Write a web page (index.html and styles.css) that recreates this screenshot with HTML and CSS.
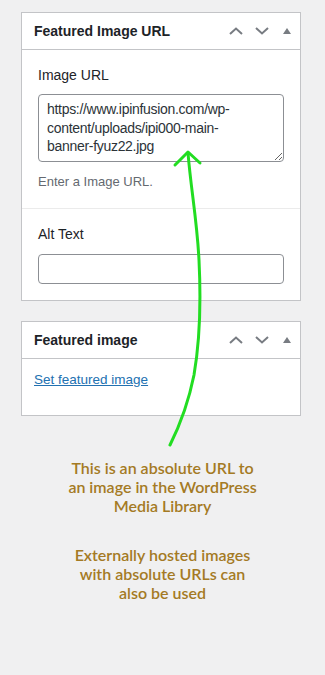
FILE: index.html
```html
<!DOCTYPE html>
<html lang="en">
<head>
    <meta charset="UTF-8">
    <meta name="viewport" content="width=device-width, initial-scale=1.0">
    <title>Featured Image URL</title>
    <link rel="stylesheet" href="styles.css">
</head>
<body>
    <div class="sidebar">
        <section class="postbox">
            <header class="postbox-header">
                <h2 class="postbox-title">Featured Image URL</h2>
                <div class="handle-actions">
                    <svg class="handle" viewBox="0 0 14 8" width="14" height="8"><path d="M1 7 L7 1.5 L13 7" fill="none" stroke="#787c82" stroke-width="2"/></svg>
                    <svg class="handle" viewBox="0 0 14 8" width="14" height="8"><path d="M1 1 L7 6.5 L13 1" fill="none" stroke="#787c82" stroke-width="2"/></svg>
                    <svg class="handle toggle" viewBox="0 0 8 6" width="8" height="6"><path d="M4 0 L8 6 L0 6 Z" fill="#787c82"/></svg>
                </div>
            </header>
            <div class="field">
                <label class="field-label" for="image-url">Image URL</label>
                <textarea id="image-url" class="field-textarea" rows="3">https://www.ipinfusion.com/wp-content/uploads/ipi000-main-banner-fyuz22.jpg</textarea>
                <p class="field-help">Enter a Image URL.</p>
            </div>
            <div class="field field-last">
                <label class="field-label" for="alt-text">Alt Text</label>
                <input id="alt-text" class="field-input" type="text">
            </div>
        </section>

        <section class="postbox">
            <header class="postbox-header">
                <h2 class="postbox-title">Featured image</h2>
                <div class="handle-actions">
                    <svg class="handle" viewBox="0 0 14 8" width="14" height="8"><path d="M1 7 L7 1.5 L13 7" fill="none" stroke="#787c82" stroke-width="2"/></svg>
                    <svg class="handle" viewBox="0 0 14 8" width="14" height="8"><path d="M1 1 L7 6.5 L13 1" fill="none" stroke="#787c82" stroke-width="2"/></svg>
                    <svg class="handle toggle" viewBox="0 0 8 6" width="8" height="6"><path d="M4 0 L8 6 L0 6 Z" fill="#787c82"/></svg>
                </div>
            </header>
            <div class="postbox-inside">
                <a href="#" class="set-image">Set featured image</a>
            </div>
        </section>
    </div>

    <div class="notes">
        <p>This is an absolute URL to<br>an image in the WordPress<br>Media Library</p>
        <p>Externally hosted images<br>with absolute URLs can<br>also be used</p>
    </div>

    <!-- hand-drawn arrow over the panels -->
    <svg class="arrow" width="325" height="675" viewBox="0 0 325 675">
        <path d="M170 445 C180 425 188 405 194 375 C200 340 201 300 199 260 C197 220 191 190 188 153" fill="none" stroke="#22dd22" stroke-width="3" stroke-linecap="round"/>
        <path d="M175 165 L188 152 L200 163" fill="none" stroke="#22dd22" stroke-width="3" stroke-linecap="round" stroke-linejoin="round"/>
    </svg>
</body>
</html>
```

FILE: styles.css
```css
body {
    margin: 0;
    background-color: #f0f0f1;
    font-family: "Liberation Sans", Arial, sans-serif;
    color: #1d2327;
    position: relative;
    min-height: 675px;
}

.sidebar {
    width: 280px;
    padding: 12px 0 0 21px;
    display: flex;
    flex-direction: column;
    gap: 20px;
}

.postbox {
    background-color: white;
    border: 1px solid #c3c4c7;
}

.postbox-header {
    height: 36px;
    display: flex;
    align-items: center;
    justify-content: space-between;
    border-bottom: 1px solid #c3c4c7;
    padding: 0 9px 0 12px;
}

.postbox-title {
    margin: 0;
    font-size: 14px;
    font-weight: bold;
    color: #1d2327;
}

.handle-actions {
    display: flex;
    align-items: center;
    gap: 12px;
}

.handle.toggle {
    margin-left: 2px;
}

.field {
    padding: 15px 16px 17px;
    border-bottom: 1px solid #ebebeb;
    display: flex;
    flex-direction: column;
}

.field-last {
    border-bottom: none;
    padding-bottom: 16px;
}

.field-label {
    font-size: 14px;
    line-height: 20px;
    color: #1d2327;
    margin-bottom: 9px;
}

.field-last .field-label {
    margin-bottom: 10px;
}

.field-textarea {
    box-sizing: border-box;
    width: 100%;
    height: 68px;
    padding: 5px 30px 3px 8px;
    font-family: inherit;
    font-size: 14px;
    letter-spacing: -0.3px;
    line-height: 18.5px;
    color: #2c3338;
    border: 1px solid #8c8f94;
    border-radius: 4px;
    resize: vertical;
    overflow: hidden;
}

.field-help {
    margin: 11px 0 0;
    font-size: 13px;
    line-height: 18px;
    color: #646970;
}

.field-input {
    box-sizing: border-box;
    width: 100%;
    height: 30px;
    border: 1px solid #8c8f94;
    border-radius: 4px;
}

.postbox-inside {
    padding: 11px 12px 25px;
}

.set-image {
    font-size: 13.5px;
    line-height: 20px;
    color: #2271b1;
}

.notes {
    margin-top: 42px;
    text-align: center;
    font-family: Lato, sans-serif;
    font-size: 16px;
    font-weight: 600;
    line-height: 19px;
    color: #a47a24;
}

.notes p {
    margin: 0 0 30px;
}

.arrow {
    position: absolute;
    top: 0;
    left: 0;
    pointer-events: none;
}
```
